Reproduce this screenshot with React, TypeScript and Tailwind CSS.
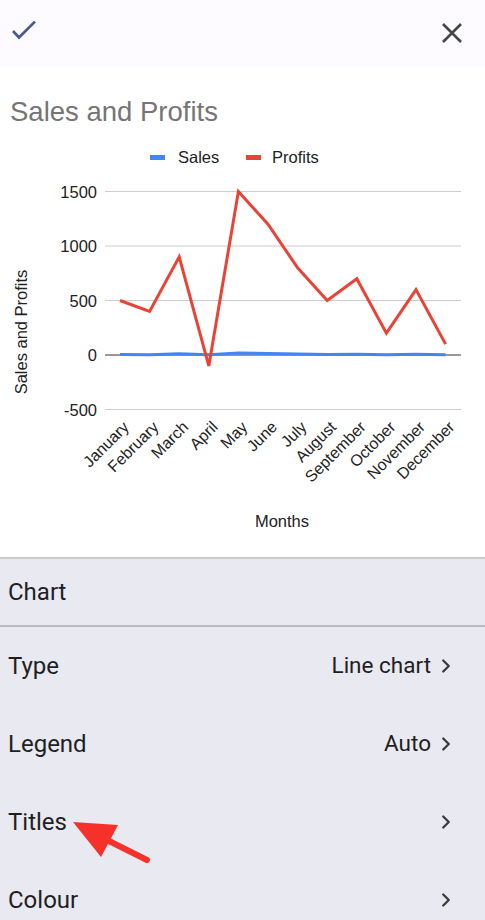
import { ChevronRight } from 'lucide-react';

const months = [
  'January', 'February', 'March', 'April', 'May', 'June',
  'July', 'August', 'September', 'October', 'November', 'December',
];
const profits = [500, 400, 900, -100, 1500, 1200, 800, 500, 700, 200, 600, 100];
const sales = [5, 3, 12, 2, 18, 14, 9, 5, 8, 3, 6, 2];

const px = (i: number) => 120 + i * 29.6;
const py = (v: number) => 355 - v * 0.109;
const toPoints = (vals: number[]) => vals.map((v, i) => `${px(i)},${py(v)}`).join(' ');

function Chart() {
  const ticks = [1500, 1000, 500, 0, -500];
  return (
    <svg
      width={485}
      height={417}
      viewBox="0 140 485 417"
      className="block"
      style={{ fontFamily: '"Liberation Sans", Arial, sans-serif' }}
    >
      <rect x={150} y={155} width={15} height={5} fill="#4285f4" />
      <text x={178} y={163} fontSize={16.5} fill="#222">Sales</text>
      <rect x={246} y={155} width={15} height={5} fill="#ea4335" />
      <text x={272} y={163} fontSize={16.5} fill="#222">Profits</text>

      {ticks.map((t) => (
        <g key={t}>
          <line
            x1={105}
            x2={461}
            y1={py(t)}
            y2={py(t)}
            stroke={t === 0 ? '#333' : '#ccc'}
            strokeWidth={1}
          />
          <text x={97} y={py(t) + 6} fontSize={16.5} textAnchor="end" fill="#222">
            {t}
          </text>
        </g>
      ))}

      <text
        transform="translate(27 332) rotate(-90)"
        fontSize={16.5}
        textAnchor="middle"
        fill="#222"
      >
        Sales and Profits
      </text>

      <polyline points={toPoints(sales)} fill="none" stroke="#4285f4" strokeWidth={3} />
      <polyline points={toPoints(profits)} fill="none" stroke="#ea4335" strokeWidth={3} />

      {months.map((m, i) => (
        <text
          key={m}
          transform={`translate(${px(i) + 10} 428) rotate(-45)`}
          fontSize={16}
          textAnchor="end"
          fill="#222"
        >
          {m}
        </text>
      ))}

      <text x={282} y={527} fontSize={16.5} textAnchor="middle" fill="#222">
        Months
      </text>
    </svg>
  );
}

function Row({ label, value }: { label: string; value?: string }) {
  return (
    <div className="h-[78px] flex items-center justify-between pl-2 pr-7">
      <span className="text-[24px] text-[#1f1f23]">{label}</span>
      <div className="flex items-center gap-1">
        {value && <span className="text-[22.5px] text-[#1f1f23]">{value}</span>}
        <ChevronRight size={22} strokeWidth={2.6} className="text-[#3c3c40]" />
      </div>
    </div>
  );
}

export default function App() {
  return (
    <div
      className="relative w-[485px] h-[920px] overflow-hidden bg-white"
      style={{ fontFamily: 'Roboto, "Liberation Sans", sans-serif' }}
    >
      <div className="h-[66px] bg-[#fdfbff] flex items-center justify-between px-3">
        <svg width={26} height={24} viewBox="0 0 26 24">
          <polyline points="1,10 7,16.5 23,0.5" fill="none" stroke="#475a93" strokeWidth={2.6} />
        </svg>
        <svg width={24} height={24} viewBox="0 0 24 24" className="mr-[9px]">
          <path d="M3 3 L21 21 M21 3 L3 21" stroke="#444549" strokeWidth={2.6} />
        </svg>
      </div>

      <div
        className="h-[74px] flex items-center pl-[10px] pt-[18px] text-[27.5px] text-[#757575]"
        style={{ fontFamily: '"Liberation Sans", Arial, sans-serif' }}
      >
        Sales and Profits
      </div>

      <Chart />

      <div className="bg-[#e9e9f1] border-t-2 border-[#c9c9ce] h-[363px]">
        <div className="h-[68px] flex items-center pl-2 border-b-2 border-[#b9b9be]">
          <span className="text-[24px] text-[#1f1f23]">Chart</span>
        </div>
        <Row label="Type" value="Line chart" />
        <Row label="Legend" value="Auto" />
        <Row label="Titles" />
        <Row label="Colour" />
      </div>

      <svg
        className="absolute left-0 top-0 pointer-events-none"
        width={485}
        height={920}
        viewBox="0 0 485 920"
      >
        <line x1={147} y1={860} x2={95} y2={834} stroke="#f5312a" strokeWidth={6} strokeLinecap="round" />
        <polygon points="73,822 118,825 101,857" fill="#f5312a" />
      </svg>
    </div>
  );
}
